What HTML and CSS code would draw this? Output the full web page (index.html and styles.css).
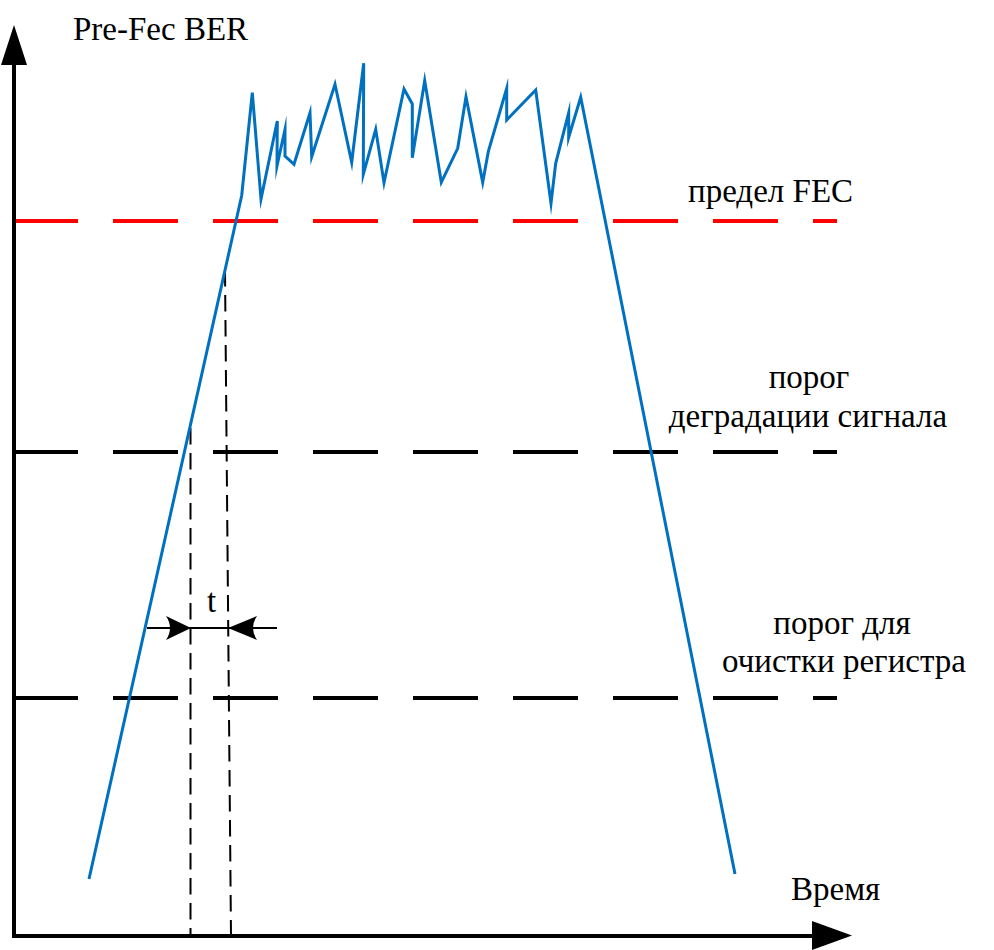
FILE: index.html
```html
<!DOCTYPE html>
<html lang="ru">
<head>
<meta charset="utf-8">
<title>Pre-Fec BER</title>
<link rel="stylesheet" href="styles.css">
</head>
<body>
<main class="figure">
<svg class="chart" width="994" height="950" viewBox="0 0 994 950" xmlns="http://www.w3.org/2000/svg">
  <!-- thresholds -->
  <line class="th th-red" x1="13" y1="221" x2="837" y2="221"/>
  <line class="th th-black" x1="13" y1="452" x2="837" y2="452"/>
  <line class="th th-black" x1="13" y1="698" x2="837" y2="698"/>

  <!-- thin dashed verticals -->
  <line class="vdash" x1="190.5" y1="428" x2="190.5" y2="936"/>
  <line class="vdash" x1="225" y1="270" x2="231" y2="936"/>

  <!-- t measure -->
  <line class="measure" x1="147" y1="628" x2="277" y2="628"/>
  <path class="head" d="M191,628 L166,616 Q174,628 166,640 Z"/>
  <path class="head" d="M228,628 L257,616 Q249,628 257,640 Z"/>

  <!-- signal -->
  <polyline class="signal" points="89,879 241.7,195.5 252.3,92.7 261,199 277.3,121 277,166 285,129.3 285,156 294,164.3 310,112.7 311.7,156.7 335,84.3 351.7,162.3 363.7,63.3 363.3,174.3 375.7,129.3 384,182.7 404,89 412.3,104 412.3,157.7 424.7,80.7 441.3,182.3 457.7,148.3 466,96.7 482.7,182.3 488.3,151.7 506.7,88.3 506.7,120 535.7,90 551,203.3 555.7,163.3 568.7,112.7 568.7,137.3 580.7,97.3 735,874"/>

  <!-- axes -->
  <line class="axis" x1="14" y1="60" x2="14" y2="938"/>
  <line class="axis" x1="12" y1="936" x2="816" y2="936"/>
  <path class="axis-head" d="M14,25 L27,65 L1,65 Z"/>
  <path class="axis-head" d="M852,935.5 L812,921 L812,950 Z"/>

  <!-- labels -->
  <text class="label" x="73" y="40">Pre-Fec BER</text>
  <text class="label" x="688" y="202">предел FEC</text>
  <text class="label mid" x="809" y="388">порог</text>
  <text class="label mid" x="808" y="427">деградации сигнала</text>
  <text class="label mid" x="842" y="634">порог для</text>
  <text class="label mid" x="844" y="672">очистки регистра</text>
  <text class="label" x="207" y="612">t</text>
  <text class="label" x="791" y="900">Время</text>
</svg>
</main>
</body>
</html>
```
FILE: styles.css
```css
html, body {
  margin: 0;
  padding: 0;
  background: #ffffff;
}

.figure {
  width: 994px;
  height: 950px;
  overflow: hidden;
}

.chart {
  display: block;
}

.th {
  stroke-width: 4;
  stroke-dasharray: 65 35;
  fill: none;
}

.th-red {
  stroke: #ff0000;
}

.th-black {
  stroke: #000000;
}

.vdash {
  stroke: #000000;
  stroke-width: 2;
  stroke-dasharray: 16.5 8.5;
  fill: none;
}

.measure {
  stroke: #000000;
  stroke-width: 2;
}

.head {
  fill: #000000;
  stroke: none;
}

.signal {
  fill: none;
  stroke: #0070c0;
  stroke-width: 3;
  stroke-linejoin: miter;
  stroke-miterlimit: 10;
}

.axis {
  stroke: #000000;
  stroke-width: 4;
}

.axis-head {
  fill: #000000;
}

.label {
  font-family: "Liberation Serif", "Times New Roman", serif;
  font-size: 33px;
  fill: #000000;
}

.mid {
  text-anchor: middle;
}
```
